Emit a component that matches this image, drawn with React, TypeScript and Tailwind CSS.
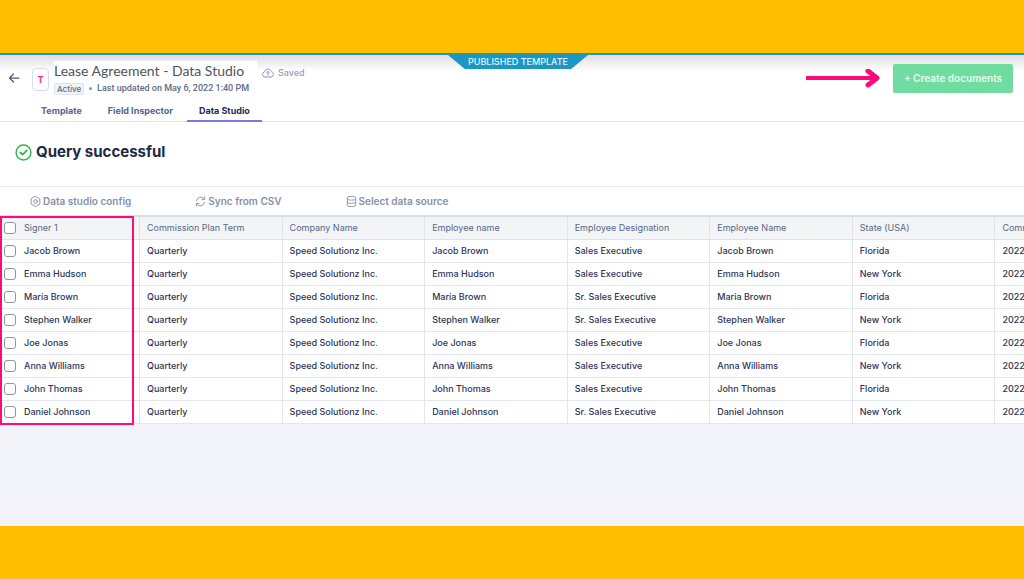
import { useState } from 'react';
import type { ReactNode } from 'react';

interface Row {
  name: string;
  designation: string;
  state: string;
}

const columns = [
  'Commission Plan Term',
  'Company Name',
  'Employee name',
  'Employee Designation',
  'Employee Name',
  'State (USA)',
  'Commission Date',
];

const rows: Row[] = [
  { name: 'Jacob Brown', designation: 'Sales Executive', state: 'Florida' },
  { name: 'Emma Hudson', designation: 'Sales Executive', state: 'New York' },
  { name: 'Maria Brown', designation: 'Sr. Sales Executive', state: 'Florida' },
  { name: 'Stephen Walker', designation: 'Sr. Sales Executive', state: 'New York' },
  { name: 'Joe Jonas', designation: 'Sales Executive', state: 'Florida' },
  { name: 'Anna Williams', designation: 'Sales Executive', state: 'New York' },
  { name: 'John Thomas', designation: 'Sales Executive', state: 'Florida' },
  { name: 'Daniel Johnson', designation: 'Sr. Sales Executive', state: 'New York' },
];

const tabs = ['Template', 'Field Inspector', 'Data Studio'];

function Icon({ className, children }: { className: string; children: ReactNode }) {
  return (
    <svg
      viewBox="0 0 24 24"
      fill="none"
      stroke="currentColor"
      strokeWidth="2"
      strokeLinecap="round"
      strokeLinejoin="round"
      aria-hidden="true"
      className={className}
    >
      {children}
    </svg>
  );
}

function Checkbox({ label, checked, onChange }: { label: string; checked: boolean; onChange: () => void }) {
  return (
    <input
      type="checkbox"
      aria-label={label}
      checked={checked}
      onChange={onChange}
      className="block h-3 w-3 shrink-0 appearance-none rounded-[3px] border border-[#8b999f] bg-white checked:bg-[#6c6ce0]"
    />
  );
}

function Header() {
  const [active, setActive] = useState('Data Studio');

  return (
    <header className="relative border-t-2 border-b border-t-[#2496ba] border-b-[#dfe5ef] bg-white bg-linear-to-b from-[#dedede] to-white to-[16px]">
      <div className="absolute top-0 left-1/2 -ml-16 flex h-[14px] w-[140px] items-center justify-center bg-[#1c97c4] text-[9px] leading-[12px] font-medium whitespace-nowrap text-[#e3f5fb] [clip-path:polygon(0_0,100%_0,88%_100%,12%_100%)]">
        PUBLISHED TEMPLATE
      </div>
      <div className="flex items-start justify-between pt-[6px] pr-[11px] pl-2">
        <div className="flex items-start">
          <button aria-label="Back" className="mt-[11px] text-[#4b5b78]">
            <Icon className="h-3 w-3">
              <path d="M22 12H3M11 4l-8 8 8 8" strokeWidth="2.500" />
            </Icon>
          </button>
          <div className="mt-[7px] ml-3 flex h-[23px] w-[17px] items-center justify-center rounded-[4px] border border-[#d9dce6] bg-white text-[9px] font-bold text-[#ff2d87]">
            T
          </div>
          <div className="ml-[5px]">
            <h1 className="w-[203px] bg-white font-[Lato] text-[14px] leading-[20px] whitespace-nowrap text-[#4f545c]">
              Lease Agreement - Data Studio
            </h1>
            <div className="flex items-center font-[Roboto] text-[9px] leading-[12px] font-medium text-[#5d6b86]">
              <span className="mt-[2px] rounded-[2px] border border-[#dfe4ec] bg-[#f0f3f8] px-[2px] font-[Inter] text-[8px] leading-[10px]">
                Active
              </span>
              <span className="mx-[5px] h-[3px] w-[3px] rounded-full bg-[#7296d0]" />
              <span>Last updated on May 6, 2022 1:40 PM</span>
            </div>
          </div>
          <div className="mt-[6px] ml-[5px] flex items-center gap-1 text-[9px] leading-[12px] font-medium text-[#939fb4]">
            <Icon className="h-3 w-3">
              <path d="M7 20H6a5 5 0 0 1-1-9.900A7 7 0 0 1 18.500 9 5.600 5.600 0 0 1 18 20h-1M7 20h10M12 17V9M9 12l3-3 3 3" />
            </Icon>
            Saved
          </div>
        </div>
        <div className="mt-[3px] flex items-center gap-[13px]">
          <svg viewBox="0 0 74 20" fill="none" stroke="#ff0a7b" strokeWidth="4" aria-hidden="true" className="h-5 w-[74px]">
            <path d="M0 9h70" />
            <path d="M62 2l9 7-9 7" strokeWidth="5" strokeLinecap="round" strokeLinejoin="round" />
          </svg>
          <button className="h-[29px] w-[120px] rounded-[2px] bg-[#70dc9f] text-[10px] font-semibold whitespace-nowrap text-[#e8fbf0]">
            + Create documents
          </button>
        </div>
      </div>
      <nav className="-mb-px flex gap-[2px] pt-[6px] pl-[29px]">
        {tabs.map((tab) => (
          <button
            key={tab}
            onClick={() => setActive(tab)}
            className={
              tab === active
                ? 'border-b-2 border-[#7a78dc] px-3 pt-1 pb-[3px] text-[9px] leading-[12px] font-bold text-[#232a56]'
                : 'border-b-2 border-transparent px-3 pt-1 pb-[3px] text-[9px] leading-[12px] font-bold text-[#53668a]'
            }
          >
            {tab}
          </button>
        ))}
      </nav>
    </header>
  );
}

function Toolbar() {
  const button = 'flex items-center gap-[2px] text-[10px] leading-[12px] font-semibold whitespace-nowrap text-[#8592aa]';

  return (
    <div className="flex h-[28px] items-center gap-16 bg-white pl-[30px]">
      <button className={button}>
        <Icon className="h-[11px] w-[11px]">
          <path d="M12 1l9.500 5.500v11L12 23l-9.500-5.500v-11z" />
          <circle cx="12" cy="12" r="4" />
        </Icon>
        Data studio config
      </button>
      <button className={button}>
        <Icon className="h-[11px] w-[11px]">
          <path d="M3 10a9.500 9.500 0 0 1 17-3.500M21 2v6h-6M21 14a9.500 9.500 0 0 1-17 3.500M3 22v-6h6" />
        </Icon>
        Sync from CSV
      </button>
      <button className={button}>
        <Icon className="h-[11px] w-[11px]">
          <rect x="3" y="1" width="18" height="22" rx="4" />
          <path d="M3 7c0 3 18 3 18 0M3 14c0 3 18 3 18 0" />
        </Icon>
        Select data source
      </button>
    </div>
  );
}

function DataTable() {
  const [selected, setSelected] = useState<string[]>([]);
  const allSelected = selected.length === rows.length;

  const toggle = (name: string) =>
    setSelected((prev) => (prev.includes(name) ? prev.filter((n) => n !== name) : [...prev, name]));

  const cell = 'h-[23px] border-b border-l border-[#e3e6ec] py-0 pr-0 pl-[7px]';

  return (
    <div className="relative">
      <div className="overflow-hidden border-t-2 border-[#d6dfe7]">
        <table className="w-[1137px] table-fixed border-separate border-spacing-0 text-left text-[9px] leading-[12px] font-medium whitespace-nowrap text-[#2e3557]">
          <colgroup>
            <col className="w-[139px]" />
            {columns.map((column) => (
              <col key={column} />
            ))}
          </colgroup>
          <thead className="bg-[#f3f4f6] text-[#566787]">
            <tr>
              <th className="h-[23px] border-b border-[#dbe3ec] py-0 pl-1 font-normal">
                <div className="flex items-center gap-2">
                  <Checkbox
                    label="Select all rows"
                    checked={allSelected}
                    onChange={() => setSelected(allSelected ? [] : rows.map((r) => r.name))}
                  />
                  Signer 1
                </div>
              </th>
              {columns.map((column) => (
                <th key={column} className="h-[23px] border-b border-l border-[#dbe3ec] py-0 pl-[7px] font-normal">
                  {column}
                </th>
              ))}
            </tr>
          </thead>
          <tbody className="bg-white">
            {rows.map((row) => (
              <tr key={row.name}>
                <td className="h-[23px] border-b border-[#e3e6ec] py-0 pl-1">
                  <div className="flex items-center gap-2">
                    <Checkbox
                      label={`Select ${row.name}`}
                      checked={selected.includes(row.name)}
                      onChange={() => toggle(row.name)}
                    />
                    {row.name}
                  </div>
                </td>
                <td className={cell}>Quarterly</td>
                <td className={cell}>Speed Solutionz Inc.</td>
                <td className={cell}>{row.name}</td>
                <td className={cell}>{row.designation}</td>
                <td className={cell}>{row.name}</td>
                <td className={cell}>{row.state}</td>
                <td className={cell}>2022-05-06</td>
              </tr>
            ))}
          </tbody>
        </table>
      </div>
      {/* highlight around the signer column */}
      <div className="pointer-events-none absolute top-px -bottom-px left-0 w-[134px] border-2 border-[#ff0a7b]" />
    </div>
  );
}

export default function App() {
  return (
    <div className="flex min-h-screen flex-col overflow-hidden bg-[#ffbf00] py-[53px] font-[Inter,sans-serif]">
      <main className="flex-1 bg-[#f3f4fa]">
        <Header />
        <section className="flex h-[65px] items-center gap-1 border-b border-[#e3e9f0] bg-white pb-1 pl-[15px]">
          <Icon className="h-[17px] w-[17px] text-[#2cb742]">
            <circle cx="12" cy="12" r="10.500" />
            <path d="M7.500 12l3.200 3 6-6" strokeWidth="2.500" />
          </Icon>
          <h2 className="text-[15px] leading-[20px] font-bold text-[#202a44]">Query successful</h2>
        </section>
        <Toolbar />
        <DataTable />
      </main>
    </div>
  );
}
